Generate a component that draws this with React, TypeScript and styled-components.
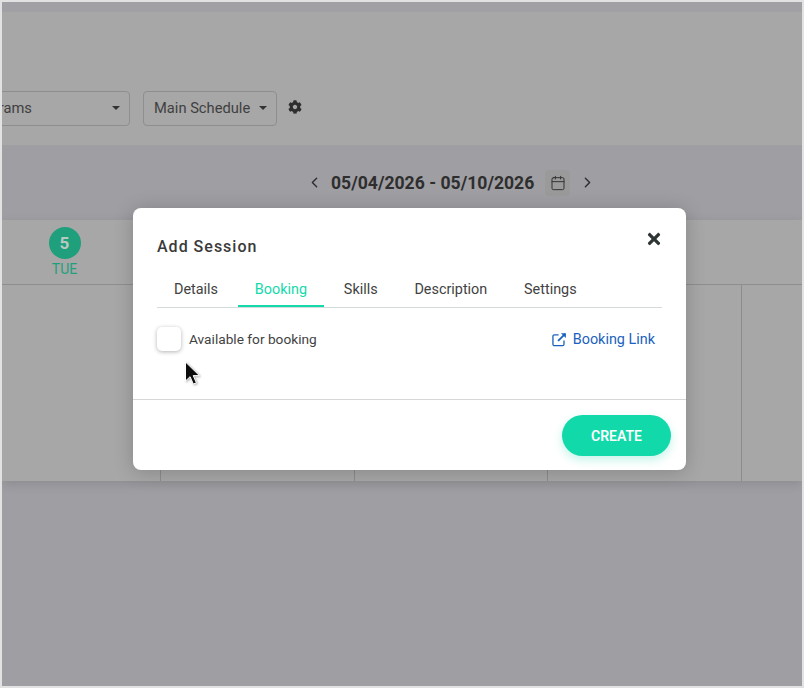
import React from "react";
import styled, { createGlobalStyle } from "styled-components";
import { Calendar, ChevronLeft, ChevronRight } from "lucide-react";
import { FaCog, FaTimes } from "react-icons/fa";

const tabs = ["Details", "Booking", "Skills", "Description", "Settings"];
const bodyColumns = [0, 1, 2, 3, 4];

const GlobalStyle = createGlobalStyle`
  html, body {
    margin: 0;
    padding: 0;
    background: #e2e2e2;
  }
  * {
    box-sizing: border-box;
  }
`;

export default function App() {
  return (
    <>
      <GlobalStyle />
      <SFrame>
        <STopStrip />
        <SHeader>
          <SProgramSelect>
            <span>Programs</span>
            <SCaret />
          </SProgramSelect>
          <SScheduleSelect>
            <span>Main Schedule</span>
            <SCaret />
          </SScheduleSelect>
          <SGear>
            <FaCog size={14} />
          </SGear>
        </SHeader>
        <SDateBar>
          <SArrow>
            <ChevronLeft size={17} strokeWidth={2} />
          </SArrow>
          <SDateText>05/04/2026 - 05/10/2026</SDateText>
          <SCalendarButton>
            <Calendar size={16} strokeWidth={1.5} />
          </SCalendarButton>
          <SArrow>
            <ChevronRight size={17} strokeWidth={2} />
          </SArrow>
        </SDateBar>
        <SGrid>
          <SDayRow>
            <SDayCell>
              <SDayNumber>5</SDayNumber>
              <SDayName>TUE</SDayName>
            </SDayCell>
          </SDayRow>
          <SBodyRow>
            {bodyColumns.map((col) => (
              <SBodyColumn key={col} />
            ))}
          </SBodyRow>
        </SGrid>

        <SModal>
          <SModalHead>
            <STitle>Add Session</STitle>
            <SClose>
              <FaTimes size={18} />
            </SClose>
          </SModalHead>
          <STabs>
            {tabs.map((tab) => (
              <STab key={tab} $active={tab === "Booking"}>
                {tab}
              </STab>
            ))}
          </STabs>
          <SBookingRow>
            <SCheckLabel>
              <SCheckbox />
              Available for booking
            </SCheckLabel>
            <SBookingLink>
              <svg width="16" height="16" viewBox="0 0 16 16" fill="none" stroke="currentColor">
                <path d="M12.8 9v4a1.6 1.6 0 0 1-1.6 1.6H2.6A1.6 1.6 0 0 1 1 13V4.6A1.6 1.6 0 0 1 2.6 3H7" strokeWidth="1.4" />
                <path d="M6.5 9.5 14 2" strokeWidth="1.9" />
                <path d="M9.5 1.2h5.3v5.3z" fill="currentColor" stroke="none" />
              </svg>
              Booking Link
            </SBookingLink>
          </SBookingRow>
          <SFooter>
            <SCreateButton>CREATE</SCreateButton>
          </SFooter>
        </SModal>

        <SCursor>
          <svg width="17" height="27" viewBox="0 0 17 27">
            <path d="M1.5 1v19l4.6-4.3 3.2 7.4 3.1-1.3-3.2-7.2h6.2z" fill="#0c0c0c" stroke="#fff" strokeWidth="1" />
          </svg>
        </SCursor>
      </SFrame>
    </>
  );
}

const SFrame = styled.div`
  position: relative;
  display: flex;
  flex-direction: column;
  width: 804px;
  height: 688px;
  border: 2px solid #e2e2e2;
  background-color: #9f9ea3;
  font-family: Roboto, "Liberation Sans", sans-serif;
  overflow: hidden;
`;
const STopStrip = styled.div`
  height: 10px;
  background-color: #a1a0a5;
`;
const SHeader = styled.header`
  display: flex;
  align-items: flex-start;
  gap: 13px;
  height: 133px;
  padding-top: 79px;
  background-color: #a7a7a7;
`;
const SSelect = styled.div`
  display: flex;
  align-items: center;
  justify-content: space-between;
  flex-shrink: 0;
  height: 35px;
  padding: 0 9px 2px 10px;
  border: 1px solid #8e8e8e;
  border-radius: 4px;
  color: #3f3f3f;
  font-size: 14.7px;
`;
const SProgramSelect = styled(SSelect)`
  width: 175px;
  margin-left: -47px;
  padding-left: 12px;
`;
const SScheduleSelect = styled(SSelect)`
  width: 134px;
`;
const SCaret = styled.i`
  width: 0;
  height: 0;
  border-left: 4px solid transparent;
  border-right: 4px solid transparent;
  border-top: 4px solid #333;
`;
const SGear = styled.span`
  display: flex;
  margin: 9px 0 0 -2px;
  color: #2e2e2e;
`;
const SDateBar = styled.div`
  display: flex;
  align-items: center;
  height: 75px;
  padding-left: 304px;
`;
const SArrow = styled.span`
  display: flex;
  width: 17px;
  color: #2e2e2e;
`;
const SDateText = styled.h2`
  margin: 0 11px 0 8px;
  color: #2e2e2e;
  font-size: 17.6px;
  font-weight: 700;
  white-space: nowrap;
`;
const SCalendarButton = styled.span`
  display: flex;
  align-items: center;
  justify-content: center;
  width: 25px;
  height: 26px;
  margin-right: 9px;
  border-radius: 4px;
  background-color: #9a9a9a;
  color: #333;
`;
const SGrid = styled.section`
  display: flex;
  flex-direction: column;
  height: 261px;
  background-color: #a7a7a7;
  box-shadow: 0 3px 10px rgba(0, 0, 0, 0.12);
`;
const SDayRow = styled.div`
  display: flex;
  height: 65px;
  margin-left: -34px;
  border-bottom: 1px solid #8e8e8e;
`;
const SDayCell = styled.div`
  display: flex;
  flex-direction: column;
  align-items: center;
  width: 193px;
  padding-top: 7px;
`;
const SDayNumber = styled.span`
  display: flex;
  align-items: center;
  justify-content: center;
  width: 32px;
  height: 32px;
  border-radius: 50%;
  background-color: #1f9f7c;
  color: #b9c9c2;
  font-size: 17px;
  font-weight: 700;
`;
const SDayName = styled.span`
  margin-top: 2px;
  color: #1f9f7c;
  font-size: 14px;
`;
const SBodyRow = styled.div`
  display: flex;
  flex: 1;
  margin-left: -34px;
`;
const SBodyColumn = styled.div`
  flex-shrink: 0;
  width: 193.4px;
  border-right: 1px solid #8c8c8c;
`;
const SModal = styled.div`
  position: absolute;
  top: 206px;
  left: 131px;
  display: flex;
  flex-direction: column;
  width: 553px;
  height: 262px;
  border-radius: 8px;
  background-color: #fff;
  box-shadow: 0 2px 20px rgba(0, 0, 0, 0.2);
`;
const SModalHead = styled.div`
  display: flex;
  justify-content: space-between;
  height: 66px;
  padding: 29px 23px 0 24px;
`;
const STitle = styled.h3`
  margin: 0;
  color: #3a3a3a;
  font-size: 16px;
  font-weight: 500;
  letter-spacing: 1px;
  line-height: 19px;
`;
const SClose = styled.span`
  display: flex;
  margin-top: -7px;
  color: #2f3535;
`;
const STabs = styled.nav`
  display: flex;
  gap: 2.8px;
  height: 34px;
  margin: 0 24px;
  border-bottom: 1px solid #d3dcdb;
`;
const STab = styled.a<{ $active?: boolean }>`
  height: 33px;
  padding: 6px 17px 0;
  border-bottom: 2px solid ${(p) => (p.$active ? "#14d9ab" : "transparent")};
  color: ${(p) => (p.$active ? "#14d9ab" : "#424242")};
  font-size: 14.4px;
  line-height: 19px;
`;
const SBookingRow = styled.div`
  display: flex;
  align-items: center;
  justify-content: space-between;
  height: 92px;
  padding: 0 31px 29px 24px;
  border-bottom: 1px solid #d6d6d6;
`;
const SCheckLabel = styled.label`
  display: flex;
  align-items: center;
  gap: 8px;
  color: #424242;
  font-size: 13.7px;
`;
const SCheckbox = styled.span`
  width: 24px;
  height: 24px;
  border-radius: 5px;
  background-color: #fff;
  box-shadow: 0 1px 4px rgba(0, 0, 0, 0.3);
`;
const SBookingLink = styled.a`
  display: flex;
  align-items: center;
  gap: 6px;
  padding-top: 1px;
  color: #1a62bd;
  font-size: 14.4px;
  line-height: 18px;

  svg {
    width: 15px;
    height: 15px;
  }
`;
const SFooter = styled.div`
  display: flex;
  justify-content: flex-end;
  padding: 15px 15px 0;
`;
const SCreateButton = styled.button`
  width: 109px;
  height: 41px;
  border: none;
  border-radius: 21px;
  background-color: #12d9a9;
  box-shadow: 0 4px 10px rgba(18, 217, 169, 0.25);
  color: #fff;
  font-family: inherit;
  font-size: 14px;
  font-weight: 600;
`;
const SCursor = styled.div`
  position: absolute;
  top: 359px;
  left: 182px;
  display: flex;
  filter: drop-shadow(1px 1px 1px rgba(0, 0, 0, 0.3));
`;
